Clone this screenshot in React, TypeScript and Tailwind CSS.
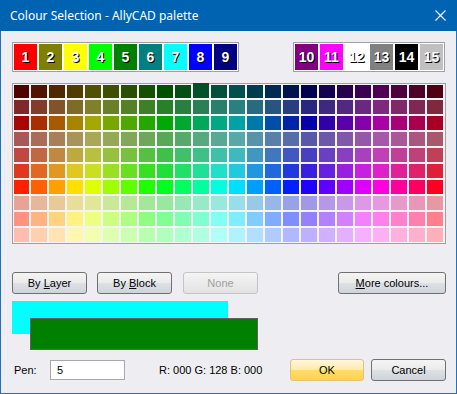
import React from "react";

const font = { fontFamily: '"Liberation Sans", Arial, sans-serif' };

const topLeft = [
  ["1", "#ff0000"],
  ["2", "#808000"],
  ["3", "#ffff00"],
  ["4", "#00ff00"],
  ["5", "#008000"],
  ["6", "#008080"],
  ["7", "#00ffff"],
  ["8", "#0000ff"],
  ["9", "#000080"],
];
const topRight = [
  ["10", "#800080"],
  ["11", "#ff00ff"],
  ["12", "#ffffff"],
  ["13", "#808080"],
  ["14", "#000000"],
  ["15", "#c0c0c0"],
];

// max, min and hue offset per row
const rows: [number, number, number][] = [
  [80, 0, 0],
  [128, 40, 0],
  [168, 0, 2],
  [168, 88, 0],
  [192, 64, 3.75],
  [224, 32, 7.5],
  [255, 0, 7.5],
  [232, 152, 7.5],
  [255, 128, 9],
  [255, 176, 9],
];

const hueColor = (h: number, max: number, min: number) => {
  h = ((h % 360) + 360) % 360;
  const f = (n: number) => {
    const k = (n + h / 60) % 6;
    return 1 - Math.max(0, Math.min(k, 4 - k, 1));
  };
  const c = (v: number) => Math.round(min + (max - min) * v);
  return `rgb(${c(f(5))},${c(f(3))},${c(f(1))})`;
};

const Swatch = ({ n, c }: { n: string; c: string }) => (
  <div
    className="w-[23px] h-[26px] flex items-center justify-center text-[14px] font-bold text-white [text-shadow:1px_1px_0_#000]"
    style={{ background: c }}
  >
    {n}
  </div>
);

const btn =
  "h-[22px] rounded-[3px] border border-[#707070] text-[11px] text-black flex items-center justify-center bg-[linear-gradient(to_bottom,#f4f4f4_0%,#ebebeb_48%,#dde1e6_52%,#cfd4da_100%)]";

export default function App() {
  return (
    <div
      className="w-[457px] h-[394px] flex flex-col bg-[#eeeef2] border-x border-b border-[#1a74c4]"
      style={font}
    >
      <div className="h-[31px] -mx-px bg-[#0063b1] flex items-center justify-between pl-[10px] pr-[11px]">
        <span
          className="text-white text-[12px]"
          style={{ fontFamily: '"Noto Sans", sans-serif' }}
        >
          Colour Selection - AllyCAD palette
        </span>
        <svg width="11" height="11" viewBox="0 0 11 11">
          <path d="M0.5 0.5L10.5 10.5M10.5 0.5L0.5 10.5" stroke="#fff" strokeWidth="1.1" />
        </svg>
      </div>

      <div className="flex flex-col pl-[11px] pr-[11px] pt-[11px]">
        <div className="flex justify-between">
          <div className="flex gap-[2px] p-px border border-[#a0a0a0] bg-white">
            {topLeft.map(([n, c]) => (
              <Swatch key={n} n={n} c={c} />
            ))}
          </div>
          <div className="flex gap-[2px] p-px border border-[#a0a0a0] bg-white">
            {topRight.map(([n, c]) => (
              <Swatch key={n} n={n} c={c} />
            ))}
          </div>
        </div>

        <div className="mt-[11px] border border-[#a0a0a0] bg-[#f4f4f6] p-px w-[434px]">
          <div className="grid grid-cols-[15px_repeat(23,16px)] grid-rows-[13px_repeat(9,14px)] gap-[2px]">
            {rows.map(([max, min, off], r) =>
              Array.from({ length: 24 }, (_, i) => (
                <div
                  key={`${r}-${i}`}
                  className={r === 0 && i === 10 ? "-mt-[2px]" : ""}
                  style={{ background: hueColor(i * 15 + off, max, min) }}
                />
              ))
            )}
          </div>
        </div>

        <div className="mt-[28px] flex items-center">
          <div className={`${btn} w-[75px]`}>
            <span>
              By <u>L</u>ayer
            </span>
          </div>
          <div className={`${btn} w-[75px] ml-[10px]`}>
            <span>
              By <u>B</u>lock
            </span>
          </div>
          <div className="ml-[11px] w-[75px] h-[22px] rounded-[3px] border border-[#c2c4c6] text-[11px] text-[#a0a0a0] flex items-center justify-center bg-[linear-gradient(to_bottom,#f4f4f4,#e2e2e2)]">
            None
          </div>
          <div className={`${btn} w-[108px] ml-auto mr-[-1px]`}>
            <span>
              <u>M</u>ore colours...
            </span>
          </div>
        </div>

        <div className="relative mt-[7px] h-[50px]">
          <div className="w-[216px] h-[33px] bg-[#00ffff]" />
          <div className="absolute left-[18px] top-[17px] w-[228px] h-[32px] bg-[#008000] border border-[#606060]" />
        </div>

        <div className="mt-[8px] flex items-center text-[11px] text-black">
          <span className="ml-[2px] w-[36px]">Pen:</span>
          <div className="w-[75px] h-[20px] border border-[#a8a8a8] bg-white flex items-center pl-[6px]">
            5
          </div>
          <span className="ml-[34px]">R: 000 G: 128 B: 000</span>
          <div className="ml-auto w-[74px] h-[22px] rounded-[3px] border border-[#e3c274] flex items-center justify-center bg-[linear-gradient(to_bottom,#fff7de_0%,#ffeaa8_48%,#ffdc6a_52%,#ffd24a_100%)]">
            OK
          </div>
          <div className={`${btn} w-[75px] ml-[7px] mr-[-1px]`}>Cancel</div>
        </div>
      </div>
    </div>
  );
}
